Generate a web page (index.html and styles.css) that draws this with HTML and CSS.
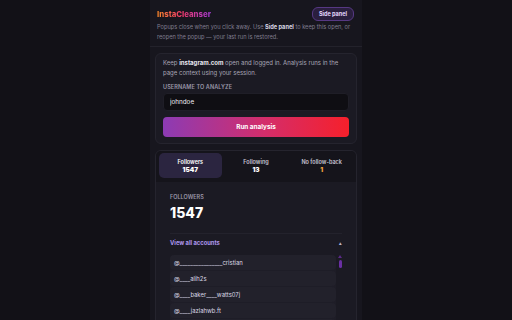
FILE: index.html
```html
<!DOCTYPE html>
<html lang="en">
<head>
    <meta charset="UTF-8">
    <meta name="viewport" content="width=device-width, initial-scale=1.0">
    <title>InstaCleanser</title>
    <link rel="stylesheet" href="styles.css">
</head>
<body>
    <div class="popup">
        <header class="header">
            <div class="title-row">
                <span class="brand">InstaCleanser</span>
                <button class="side-btn">Side panel</button>
            </div>
            <p class="note">Popups close when you click away. Use <strong>Side panel</strong> to keep this open, or reopen the popup — your last run is restored.</p>
        </header>

        <section class="card intro">
            <p class="intro-text">Keep <strong>instagram.com</strong> open and logged in. Analysis runs in the page context using your session.</p>
            <label class="field-label" for="username">Username to analyze</label>
            <input class="username" id="username" type="text" value="johndoe">
            <button class="run-btn">Run analysis</button>
        </section>

        <section class="card results">
            <div class="tabs">
                <div class="tab active"><span>Followers</span><b>1547</b></div>
                <div class="tab"><span>Following</span><b>13</b></div>
                <div class="tab"><span>No follow-back</span><b class="warn">1</b></div>
            </div>
            <div class="panel">
                <div class="stat-label">Followers</div>
                <div class="stat-value">1547</div>
                <div class="accounts">
                    <div class="accounts-head">
                        <span>View all accounts</span>
                        <span class="caret">&#9652;</span>
                    </div>
                    <div class="list-wrap">
                        <ul class="list">
                            <li>@________________cristian</li>
                            <li>@____alih2s</li>
                            <li>@____baker____watts07j</li>
                            <li>@____jazlahwb.ft</li>
                            <li>@__kellyann_</li>
                        </ul>
                        <div class="scrollbar">
                            <span class="arrow"></span>
                            <span class="thumb"></span>
                        </div>
                    </div>
                </div>
            </div>
        </section>
    </div>
</body>
</html>
```

FILE: styles.css
```css
* {
    box-sizing: border-box;
}
body {
    margin: 0;
    height: 320px;
    overflow: hidden;
    background-color: #121117;
    font-family: Inter, "Noto Sans", sans-serif;
    color: #e6e4ee;
}
.popup {
    width: 212px;
    margin: 0 auto;
    min-height: 320px;
    background-color: #17161e;
    padding-bottom: 8px;
}
.header {
    padding: 6px 7px 4px;
    border-bottom: 1px solid #23222b;
}
.title-row {
    display: flex;
    justify-content: space-between;
    align-items: center;
    height: 15px;
}
.brand {
    font-size: 7.8px;
    font-weight: 800;
    background: linear-gradient(90deg, #f58529 0%, #ee3a6a 45%, #a23ad0 100%);
    -webkit-background-clip: text;
    background-clip: text;
    color: transparent;
}
.side-btn {
    font-family: inherit;
    font-size: 5.5px;
    font-weight: 700;
    color: #e6d8ff;
    background-color: #2a1f3e;
    border: 1px solid #563883;
    border-radius: 6px;
    padding: 3px 6px;
    margin-right: 1px;
}
.note {
    margin: 2px 0 0;
    font-size: 5.65px;
    line-height: 9.6px;
    color: #807d8f;
}
.note strong {
    color: #d9d6e4;
}
.card {
    margin: 6px 5px 0;
    background-color: #1b1a23;
    border: 1px solid #25242e;
    border-radius: 6px;
}
.intro {
    padding: 4px 7px 6px;
}
.intro-text {
    margin: 0;
    font-size: 6px;
    line-height: 10px;
    color: #a9a6b6;
}
.intro-text strong {
    color: #e8e6f0;
}
.field-label {
    display: block;
    margin-top: 6px;
    font-size: 5.5px;
    font-weight: 600;
    text-transform: uppercase;
    letter-spacing: 0.1px;
    color: #9a97a8;
}
.username {
    display: block;
    width: 100%;
    height: 18px;
    margin-top: 3px;
    padding: 0 6px;
    font-family: inherit;
    font-size: 6.3px;
    color: #f1f0f6;
    background-color: #0f0e13;
    border: 1px solid #1f1e27;
    border-radius: 4px;
}
.run-btn {
    display: block;
    width: 100%;
    height: 20px;
    margin-top: 6px;
    font-family: inherit;
    font-size: 6.4px;
    font-weight: 700;
    color: #fff;
    background: linear-gradient(90deg, #8c3bb4 0%, #d42d6a 55%, #f6202b 100%);
    border: none;
    border-radius: 4px;
}
.results {
    overflow: hidden;
}
.tabs {
    display: grid;
    grid-template-columns: repeat(3, 1fr);
    gap: 3px;
    padding: 2px 3px 4px;
    background-color: #15141b;
}
.tab {
    display: flex;
    flex-direction: column;
    align-items: center;
    justify-content: center;
    height: 25px;
    border-radius: 5px;
    font-size: 5.5px;
    font-weight: 600;
    color: #c7c4d2;
    line-height: 8px;
}
.tab b {
    font-size: 6.4px;
    color: #ffffff;
}
.tab b.warn {
    color: #f0a23c;
}
.tab.active {
    background-color: #2b2540;
    color: #ffffff;
}
.panel {
    padding: 12px 14px 0;
}
.stat-label {
    font-size: 5.5px;
    font-weight: 600;
    text-transform: uppercase;
    color: #9a97a8;
}
.stat-value {
    margin-top: 4px;
    font-size: 14px;
    font-weight: 800;
    color: #ffffff;
    padding-bottom: 12px;
    border-bottom: 1px solid #23222c;
}
.accounts-head {
    display: flex;
    justify-content: space-between;
    align-items: center;
    padding: 5px 0 0;
    font-size: 5.8px;
    font-weight: 700;
    color: #ad97ee;
}
.caret {
    font-size: 5px;
    color: #bdb9cc;
}
.list-wrap {
    display: flex;
    gap: 2px;
    margin-top: 9px;
}
.list {
    flex: 1;
    list-style: none;
    margin: 0;
    padding: 0;
    background-color: #1e1d27;
    border-radius: 4px;
}
.list li {
    height: 15px;
    margin-bottom: 1px;
    padding: 0 4px;
    display: flex;
    align-items: center;
    font-size: 5.9px;
    color: #dcd9e6;
    background-color: #22212b;
    border-radius: 4px;
}
.scrollbar {
    width: 4px;
    display: flex;
    flex-direction: column;
    align-items: center;
    gap: 2px;
}
.arrow {
    width: 0;
    height: 0;
    border-left: 2px solid transparent;
    border-right: 2px solid transparent;
    border-bottom: 3px solid #5b2b88;
}
.thumb {
    width: 3px;
    height: 8px;
    border-radius: 2px;
    background-color: #6a2fa3;
}
```
